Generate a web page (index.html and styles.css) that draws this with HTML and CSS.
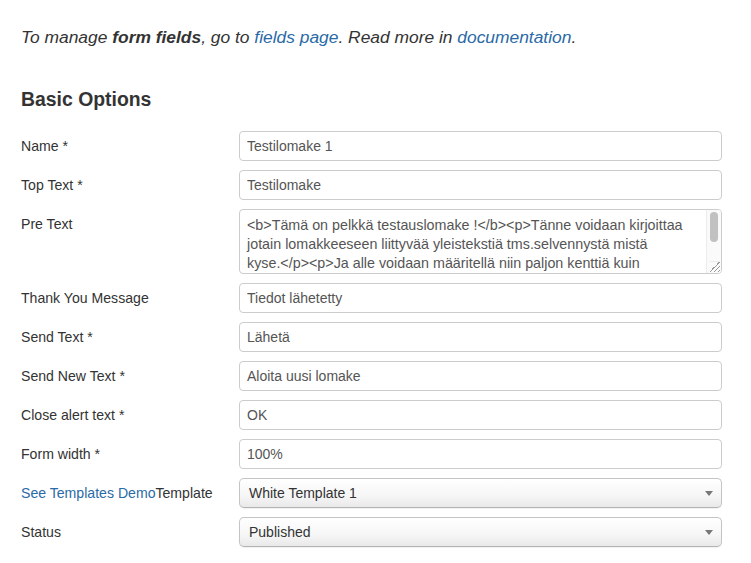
FILE: index.html
```html
<!DOCTYPE html>
<html lang="fi">
<head>
<meta charset="utf-8">
<title>Basic Options</title>
<link rel="stylesheet" href="styles.css">
</head>
<body>
<div class="page">
  <p class="intro">To manage <b>form fields</b>, go to <a href="#">fields page</a>. Read more in <a href="#">documentation</a>.</p>
  <h3 class="section-title">Basic Options</h3>
  <form class="form">
    <div class="row"><label class="lbl">Name *</label><div class="ctl"><input class="field" type="text" value="Testilomake 1"></div></div>
    <div class="row"><label class="lbl">Top Text *</label><div class="ctl"><input class="field" type="text" value="Testilomake"></div></div>
    <div class="row"><label class="lbl">Pre Text</label><div class="ctl area-wrap"><textarea class="field area">&lt;b&gt;Tämä on pelkkä testauslomake !&lt;/b&gt;&lt;p&gt;Tänne voidaan kirjoittaa jotain lomakkeeseen liittyvää yleistekstiä tms.selvennystä mistä kyse.&#8288;&lt;/p&gt;&#8288;&lt;p&gt;&#8288;Ja alle voidaan määritellä niin paljon kenttiä kuin halutaan, ja niiden järjestystä voi muuttaa vapaasti.&lt;/p&gt;</textarea><span class="sbar"><span class="thumb"></span></span><span class="grip"></span></div></div>
    <div class="row"><label class="lbl">Thank You Message</label><div class="ctl"><input class="field" type="text" value="Tiedot lähetetty"></div></div>
    <div class="row"><label class="lbl">Send Text *</label><div class="ctl"><input class="field" type="text" value="Lähetä"></div></div>
    <div class="row"><label class="lbl">Send New Text *</label><div class="ctl"><input class="field" type="text" value="Aloita uusi lomake"></div></div>
    <div class="row"><label class="lbl">Close alert text *</label><div class="ctl"><input class="field" type="text" value="OK"></div></div>
    <div class="row"><label class="lbl">Form width *</label><div class="ctl"><input class="field" type="text" value="100%"></div></div>
    <div class="row"><label class="lbl"><a href="#">See Templates Demo</a>Template</label><div class="ctl sel-wrap"><select class="sel"><option>White Template 1</option></select></div></div>
    <div class="row"><label class="lbl">Status</label><div class="ctl sel-wrap"><select class="sel"><option>Published</option></select></div></div>
  </form>
</div>
</body>
</html>
```
FILE: styles.css
```css
html, body {
  margin: 0;
  padding: 0;
  background: #fff;
}
body {
  font-family: "Liberation Sans", Arial, Helvetica, sans-serif;
  color: #333;
}
.page {
  padding: 27px 21px 0 21px;
}
a {
  color: #2a6aa6;
  text-decoration: none;
}
.intro {
  margin: 0;
  font-size: 17.4px;
  line-height: 20px;
  font-style: italic;
  color: #333;
}
.intro b {
  font-weight: bold;
}
.section-title {
  margin: 40px 0 0 0;
  font-size: 19.4px;
  line-height: 24px;
  font-weight: bold;
  color: #333;
}
.form {
  margin-top: 20px;
}
.row {
  display: grid;
  grid-template-columns: 218px 483px;
  margin-bottom: 9px;
}
.lbl {
  font-size: 14.1px;
  line-height: 30px;
  color: #333;
  white-space: nowrap;
}
.ctl {
  display: flex;
}
.field {
  box-sizing: border-box;
  width: 483px;
  height: 30px;
  margin: 0;
  padding: 4px 7px;
  border: 1px solid #ccc;
  border-radius: 4px;
  font-family: "Liberation Sans", Arial, Helvetica, sans-serif;
  font-size: 14px;
  line-height: 20px;
  color: #555;
  background: #fff;
  outline: none;
}
.area-wrap {
  position: relative;
}
.area {
  height: 65px;
  padding: 6px 22px 0 7px;
  font-size: 14.3px;
  line-height: 19px;
  resize: none;
  overflow: hidden;
}
.sbar {
  position: absolute;
  right: 1px;
  top: 1px;
  bottom: 1px;
  width: 14px;
  background: #fafafa;
  border-left: 1px solid #ececec;
  border-radius: 0 3px 3px 0;
}
.thumb {
  position: absolute;
  left: 3px;
  top: 2px;
  width: 8px;
  height: 30px;
  border-radius: 4px;
  background: #c1c1c1;
}
.grip {
  position: absolute;
  right: 2px;
  bottom: 2px;
  width: 10px;
  height: 10px;
  background: linear-gradient(135deg, transparent 0 45%, #9a9a9a 45% 52%, transparent 52% 66%, #9a9a9a 66% 73%, transparent 73% 86%, #9a9a9a 86% 93%, transparent 93%);
  border-top: 1px solid #ececec;
}
.sel-wrap {
  position: relative;
}
.sel-wrap::after {
  content: "";
  position: absolute;
  right: 9px;
  top: 13px;
  width: 0;
  height: 0;
  border-left: 4px solid transparent;
  border-right: 4px solid transparent;
  border-top: 5px solid #777;
  pointer-events: none;
}
.sel {
  -webkit-appearance: none;
  appearance: none;
  box-sizing: border-box;
  width: 483px;
  height: 30px;
  margin: 0;
  padding: 3px 9px;
  border: 1px solid #c4c4c4;
  border-bottom-color: #b3b3b3;
  border-radius: 5px;
  font-family: "Liberation Sans", Arial, Helvetica, sans-serif;
  font-size: 14px;
  color: #333;
  background: linear-gradient(to bottom, #ffffff 0%, #f6f6f6 60%, #e9e9e9 100%);
  box-shadow: 0 1px 1px rgba(0,0,0,0.06);
  outline: none;
}
```
